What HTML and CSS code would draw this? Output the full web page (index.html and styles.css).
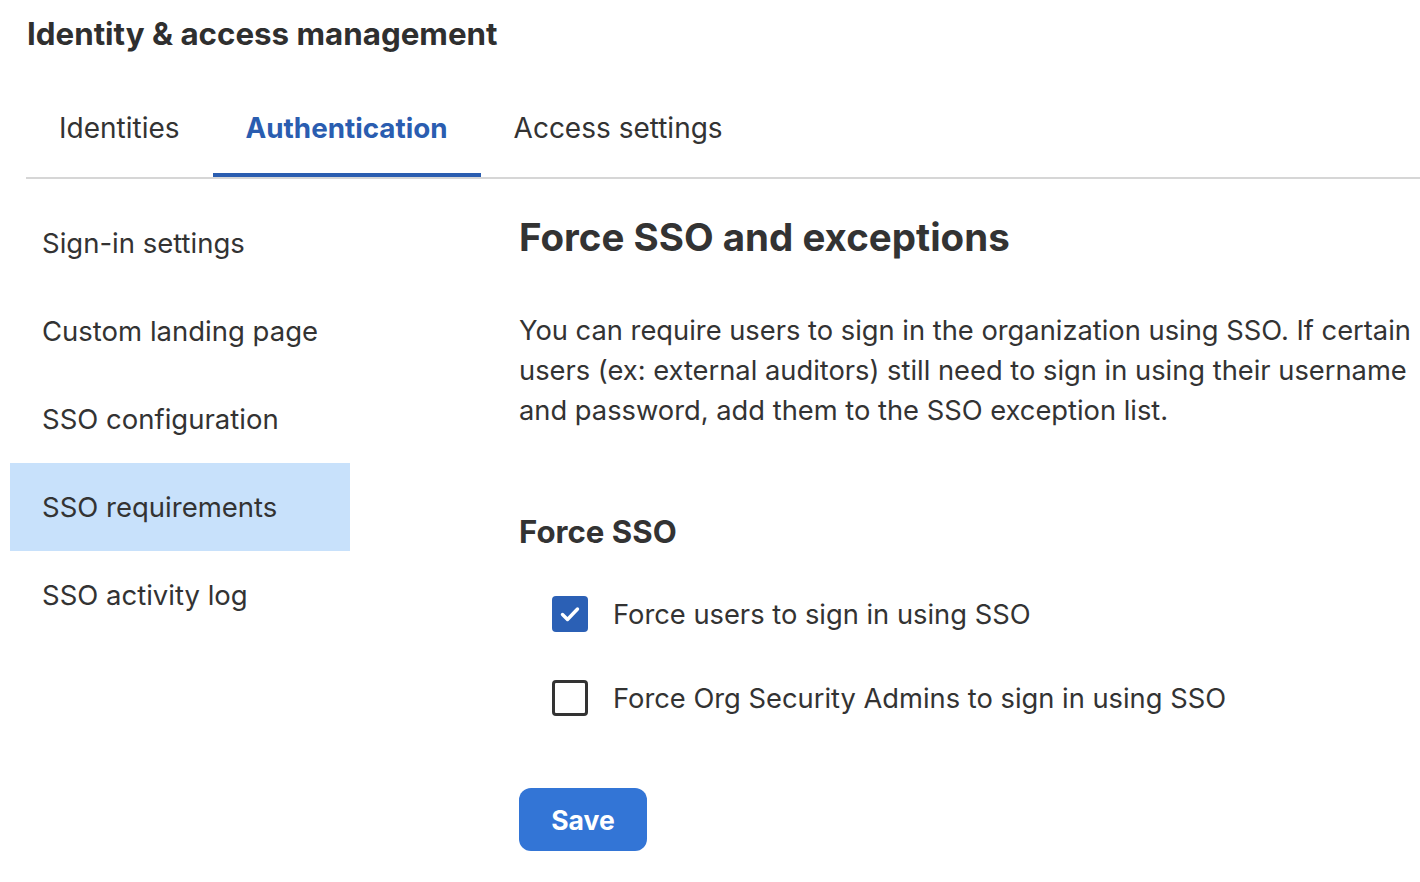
FILE: index.html
```html
<!DOCTYPE html>
<html lang="en">
<head>
<meta charset="utf-8">
<title>Identity &amp; access management</title>
<link rel="stylesheet" href="styles.css">
</head>
<body>
<div class="page">
  <h1 class="title">Identity &amp; access management</h1>
  <nav class="tabs">
    <a class="tab">Identities</a>
    <a class="tab active">Authentication</a>
    <a class="tab">Access settings</a>
  </nav>
  <div class="layout">
    <aside class="side">
      <div class="side-item">Sign-in settings</div>
      <div class="side-item">Custom landing page</div>
      <div class="side-item">SSO configuration</div>
      <div class="side-item selected">SSO requirements</div>
      <div class="side-item">SSO activity log</div>
    </aside>
    <main class="main">
      <h2 class="heading">Force SSO and exceptions</h2>
      <p class="desc">You can require users to sign in the organization using SSO. If certain users (ex: external auditors) still need to sign in using their username and password, add them to the SSO exception list.</p>
      <h3 class="subheading">Force SSO</h3>
      <div class="checks">
        <label class="check-row">
          <span class="box checked">
            <svg width="36" height="36" viewBox="0 0 36 36"><path d="M10.5 18.5 L15.5 23.5 L25.5 13" fill="none" stroke="#fff" stroke-width="3.4" stroke-linecap="round" stroke-linejoin="round"/></svg>
          </span>
          <span class="check-label">Force users to sign in using SSO</span>
        </label>
        <label class="check-row">
          <span class="box"></span>
          <span class="check-label">Force Org Security Admins to sign in using SSO</span>
        </label>
      </div>
      <button class="save">Save</button>
    </main>
  </div>
</div>
</body>
</html>
```
FILE: styles.css
```css
html, body {
  margin: 0;
  padding: 0;
  background: #ffffff;
}
body {
  font-family: "Inter", "Noto Sans", sans-serif;
  color: #333333;
}
.page {
  width: 1420px;
  height: 882px;
  overflow: hidden;
}
.title {
  margin: 0;
  padding: 14px 0 0 27px;
  font-size: 31.3px;
  line-height: 40px;
  font-weight: 700;
  color: #2f2f2f;
}
.tabs {
  display: flex;
  margin: 54px 0 0 26px;
  border-bottom: 2px solid #d6d6d6;
}
.tab {
  padding: 0 33px 25px;
  font-size: 28px;
  line-height: 40px;
  border-bottom: 4px solid transparent;
  color: #333333;
}
.tab.active {
  color: #2a5db0;
  font-weight: 700;
  font-size: 27.8px;
  border-bottom-color: #2a5db0;
}
.layout {
  display: flex;
  padding-top: 20px;
}
.side {
  margin-left: 10px;
  width: 340px;
  flex: none;
}
.side-item {
  height: 88px;
  display: flex;
  align-items: center;
  padding-left: 32px;
  font-size: 27.5px;
  color: #333333;
}
.side-item.selected {
  background: #c8e1fb;
}
.main {
  margin-left: 169px;
  flex: 1;
  min-width: 0;
}
.heading {
  margin: 14px 0 0;
  font-size: 38.5px;
  line-height: 48px;
  font-weight: 700;
  color: #333333;
}
.desc {
  margin: 50px 0 0;
  font-size: 27.3px;
  line-height: 40px;
  color: #333333;
}
.subheading {
  margin: 81px 0 0;
  font-size: 31.2px;
  line-height: 40px;
  font-weight: 700;
  color: #333333;
}
.checks {
  display: flex;
  flex-direction: column;
  gap: 44px;
  margin-top: 42px;
  padding-left: 33px;
}
.check-row {
  display: flex;
  align-items: center;
  height: 40px;
  gap: 25px;
}
.box {
  width: 36px;
  height: 36px;
  box-sizing: border-box;
  border: 3px solid #333333;
  border-radius: 4px;
  flex: none;
  display: flex;
  align-items: center;
  justify-content: center;
}
.box.checked {
  background: #2b60b5;
  border: none;
}
.check-label {
  font-size: 27.3px;
  color: #333333;
}
.save {
  margin-top: 70px;
  width: 128px;
  height: 63px;
  border: none;
  border-radius: 12px;
  background: #3375d6;
  color: #ffffff;
  font-family: inherit;
  font-size: 26.5px;
  font-weight: 700;
  display: block;
  padding: 0;
}
```
